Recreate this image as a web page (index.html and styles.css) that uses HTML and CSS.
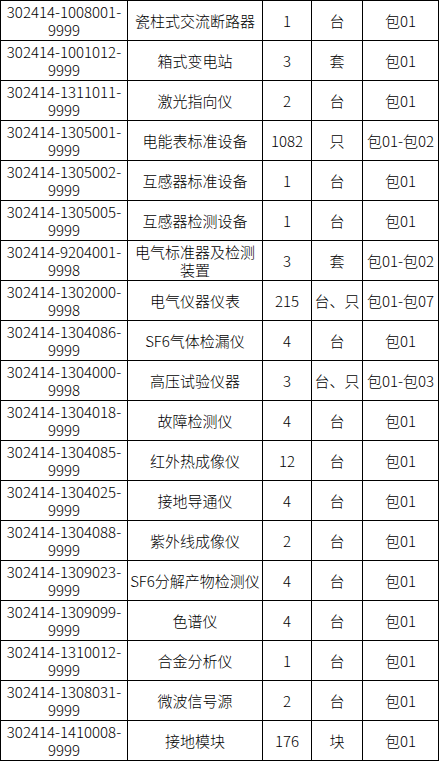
FILE: index.html
```html
<!DOCTYPE html>
<html lang="zh">
<head>
<meta charset="utf-8">
<link rel="stylesheet" href="styles.css">
</head>
<body>
<table class="list">
<colgroup>
<col class="c-code"><col class="c-name"><col class="c-qty"><col class="c-unit"><col class="c-pack">
</colgroup>
<tbody>
<tr><td>302414-1008001-9999</td><td>瓷柱式交流断路器</td><td>1</td><td>台</td><td>包01</td></tr>
<tr><td>302414-1001012-9999</td><td>箱式变电站</td><td>3</td><td>套</td><td>包01</td></tr>
<tr><td>302414-1311011-9999</td><td>激光指向仪</td><td>2</td><td>台</td><td>包01</td></tr>
<tr><td>302414-1305001-9999</td><td>电能表标准设备</td><td>1082</td><td>只</td><td>包01-包02</td></tr>
<tr><td>302414-1305002-9999</td><td>互感器标准设备</td><td>1</td><td>台</td><td>包01</td></tr>
<tr><td>302414-1305005-9999</td><td>互感器检测设备</td><td>1</td><td>台</td><td>包01</td></tr>
<tr><td>302414-9204001-9998</td><td>电气标准器及检测装置</td><td>3</td><td>套</td><td>包01-包02</td></tr>
<tr><td>302414-1302000-9998</td><td>电气仪器仪表</td><td>215</td><td>台、只</td><td>包01-包07</td></tr>
<tr><td>302414-1304086-9999</td><td>SF6气体检漏仪</td><td>4</td><td>台</td><td>包01</td></tr>
<tr><td>302414-1304000-9998</td><td>高压试验仪器</td><td>3</td><td>台、只</td><td>包01-包03</td></tr>
<tr><td>302414-1304018-9999</td><td>故障检测仪</td><td>4</td><td>台</td><td>包01</td></tr>
<tr><td>302414-1304085-9999</td><td>红外热成像仪</td><td>12</td><td>台</td><td>包01</td></tr>
<tr><td>302414-1304025-9999</td><td>接地导通仪</td><td>4</td><td>台</td><td>包01</td></tr>
<tr><td>302414-1304088-9999</td><td>紫外线成像仪</td><td>2</td><td>台</td><td>包01</td></tr>
<tr><td>302414-1309023-9999</td><td>SF6分解产物检测仪</td><td>4</td><td>台</td><td>包01</td></tr>
<tr><td>302414-1309099-9999</td><td>色谱仪</td><td>4</td><td>台</td><td>包01</td></tr>
<tr><td>302414-1310012-9999</td><td>合金分析仪</td><td>1</td><td>台</td><td>包01</td></tr>
<tr><td>302414-1308031-9999</td><td>微波信号源</td><td>2</td><td>台</td><td>包01</td></tr>
<tr><td>302414-1410008-9999</td><td>接地模块</td><td>176</td><td>块</td><td>包01</td></tr>
</tbody>
</table>
</body>
</html>
```

FILE: styles.css
```css
html, body {
  margin: 0;
  padding: 0;
  background: #fff;
}
body {
  font-family: "Noto Sans CJK SC", sans-serif;
  font-size: 15px;
  font-weight: 300;
  color: #000;
}
.list {
  border-collapse: collapse;
  table-layout: fixed;
  width: 439px;
}
.c-code { width: 127px; }
.c-name { width: 135px; }
.c-qty { width: 49px; }
.c-unit { width: 51px; }
.c-pack { width: 76px; }
.list tr {
  height: 40px;
}
.list td {
  border: 1px solid #000;
  padding: 0;
  text-align: center;
  vertical-align: middle;
  line-height: 18px;
  overflow-wrap: break-word;
}
```
